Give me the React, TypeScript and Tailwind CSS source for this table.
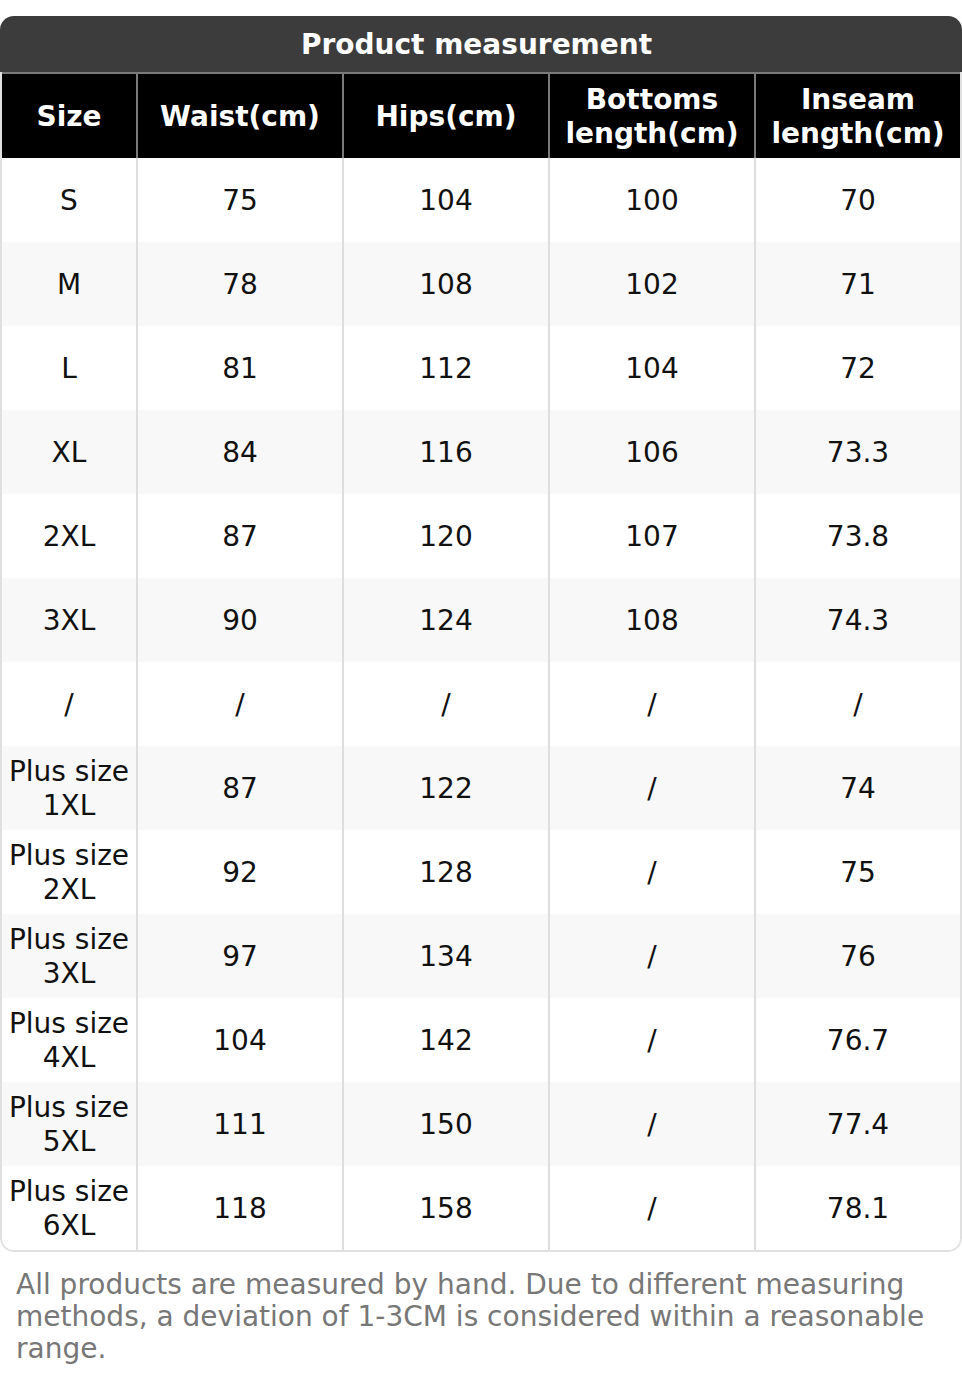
const headers = ["Size", "Waist(cm)", "Hips(cm)", "Bottoms length(cm)", "Inseam length(cm)"];

const rows: string[][] = [
    ["S", "75", "104", "100", "70"],
    ["M", "78", "108", "102", "71"],
    ["L", "81", "112", "104", "72"],
    ["XL", "84", "116", "106", "73.3"],
    ["2XL", "87", "120", "107", "73.8"],
    ["3XL", "90", "124", "108", "74.3"],
    ["/", "/", "/", "/", "/"],
    ["Plus size 1XL", "87", "122", "/", "74"],
    ["Plus size 2XL", "92", "128", "/", "75"],
    ["Plus size 3XL", "97", "134", "/", "76"],
    ["Plus size 4XL", "104", "142", "/", "76.7"],
    ["Plus size 5XL", "111", "150", "/", "77.4"],
    ["Plus size 6XL", "118", "158", "/", "78.1"],
];

const cols = "grid grid-cols-[136px_206px_206px_206px_1fr]";

export default function App() {
    return (
        <div className="w-[962px] bg-white pt-4 font-['DejaVu_Sans',sans-serif]">
            <div className="rounded-[14px] overflow-hidden">
                {/* title */}
                <div className="h-[56px] bg-[#3c3c3c] flex items-center justify-center text-white text-[28px] font-bold leading-[1.2] pt-[1px] pr-[9px]">
                    Product measurement
                </div>

                <div className="border-x-2 border-b-2 border-[#e0e0e0] rounded-b-[14px] overflow-hidden">
                    {/* header */}
                    <div className={`${cols} bg-black border-t-2 border-[#7a7a7a]`}>
                        {headers.map((h, i) => (
                            <div
                                key={h}
                                className={`h-[84px] flex items-center justify-center text-center px-1 pt-[2px] text-white text-[28px] font-bold leading-[1.2] ${
                                    i < headers.length - 1 ? "border-r-2 border-[#7a7a7a]" : ""
                                }`}
                            >
                                {h}
                            </div>
                        ))}
                    </div>

                    {/* body */}
                    {rows.map((r, ri) => (
                        <div key={ri} className={`${cols} ${ri % 2 === 1 ? "bg-[#f8f8f8]" : "bg-white"}`}>
                            {r.map((c, ci) => (
                                <div
                                    key={ci}
                                    className={`h-[84px] flex items-center justify-center text-center pt-[2px] text-[#111] text-[28px] leading-[1.2] ${
                                        ci < r.length - 1 ? "border-r-2 border-[#dedede]" : ""
                                    }`}
                                >
                                    {c}
                                </div>
                            ))}
                        </div>
                    ))}
                </div>
            </div>

            <p className="px-4 pt-[17px] text-[28px] leading-[32px] text-[#777]">
                All products are measured by hand. Due to different measuring methods, a deviation of 1-3CM is considered within a reasonable range.
            </p>
        </div>
    );
}
